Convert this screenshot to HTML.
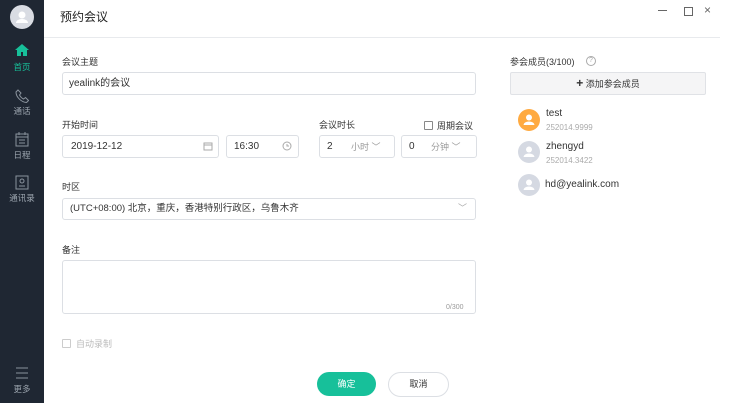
<!DOCTYPE html><html><head><meta charset="utf-8"><style>
*{margin:0;padding:0;box-sizing:border-box}
body{width:749px;height:409px;background:#fff;font-family:"Liberation Sans","Noto Sans CJK SC",sans-serif;font-size:9px;line-height:12px;color:#333;position:relative;overflow:hidden}
.a{position:absolute}
.sb{left:0;top:0;width:44px;height:403px;background:#1f2733}
.nl{width:44px;text-align:center;font-size:8.5px;color:#9aa3ad}
.in{border:1px solid #dcdfe4;border-radius:3px;background:#fff}
.lb{font-size:9px;color:#333}
.av{width:22px;height:22px;border-radius:50%;background:#d5d9e2}
</style></head><body>
<div class="a sb"></div>
<div class="a" style="left:10px;top:5px;width:24px;height:24px;border-radius:50%;background:#d9dce3"></div>
<svg class="a" style="left:10px;top:5px" width="24" height="24"><circle cx="12" cy="10" r="3.5" fill="#fff"/><path d="M6 18a6 4 0 0 1 12 0z" fill="#fff"/></svg>
<svg class="a" style="left:14px;top:43px" width="16" height="14"><path d="M8 1L1 7h2v6h4v-4h2v4h4V7h2z" fill="#17c09a"/></svg>
<div class="a nl" style="top:61px;color:#17c09a">首页</div>
<svg class="a" style="left:15px;top:89px" width="14" height="14"><path d="M3 1l3 3-1.5 2c1 2 2 3 4 4l2-1.5 3 3-2 2C6 13 1 8 1 3z" fill="none" stroke="#8a939d" stroke-width="1"/></svg>
<div class="a nl" style="top:105px">通话</div>
<svg class="a" style="left:15px;top:132px" width="14" height="15"><rect x="1" y="2" width="12" height="12" fill="none" stroke="#8a939d"/><path d="M1 5h12M4 0v3M10 0v3M4 8h6M4 11h6" stroke="#8a939d"/></svg>
<div class="a nl" style="top:149px">日程</div>
<svg class="a" style="left:15px;top:175px" width="14" height="15"><rect x="1" y="1" width="12" height="13" fill="none" stroke="#8a939d"/><circle cx="7" cy="6" r="2" fill="none" stroke="#8a939d"/><path d="M4 11h6" stroke="#8a939d"/></svg>
<div class="a nl" style="top:192px">通讯录</div>
<svg class="a" style="left:15px;top:367px" width="14" height="12"><path d="M1 1h12M1 6h12M1 11h12" stroke="#8a939d"/></svg>
<div class="a nl" style="top:383px">更多</div>

<div class="a" style="left:60px;top:10px;font-size:12px;line-height:15px;color:#222">预约会议</div>
<div class="a" style="left:658px;top:10px;width:9px;height:1px;background:#666"></div>
<div class="a" style="left:684px;top:7px;width:9px;height:9px;border:1px solid #666"></div>
<div class="a" style="left:704px;top:4px;font-size:12px;color:#666">×</div>
<div class="a" style="left:44px;top:37px;width:676px;height:1px;background:#e8eaed"></div>

<div class="a lb" style="left:62px;top:56px">会议主题</div>
<div class="a in" style="left:62px;top:72px;width:414px;height:23px"></div>
<div class="a" style="left:69px;top:78px;font-size:10px">yealink的会议</div>

<div class="a lb" style="left:62px;top:119px">开始时间</div>
<div class="a in" style="left:62px;top:135px;width:157px;height:23px"></div>
<div class="a" style="left:71px;top:141px;font-size:10px">2019-12-12</div>
<svg class="a" style="left:203px;top:141px" width="10" height="10"><rect x="1" y="2" width="8" height="7" fill="none" stroke="#aaa"/><path d="M1 4h8" stroke="#aaa"/></svg>
<div class="a in" style="left:226px;top:135px;width:73px;height:23px"></div>
<div class="a" style="left:234px;top:141px;font-size:10px">16:30</div>
<svg class="a" style="left:282px;top:141px" width="10" height="10"><circle cx="5" cy="5" r="4" fill="none" stroke="#aaa"/><path d="M5 3v2h2" fill="none" stroke="#aaa"/></svg>

<div class="a lb" style="left:319px;top:119px">会议时长</div>
<div class="a" style="left:424px;top:121px;width:9px;height:9px;border:1px solid #888;border-radius:1px"></div>
<div class="a lb" style="left:437px;top:120px">周期会议</div>
<div class="a in" style="left:319px;top:135px;width:76px;height:23px"></div>
<div class="a" style="left:327px;top:141px;font-size:10px">2</div>
<div class="a" style="left:351px;top:141px;color:#999">小时 ﹀</div>
<div class="a in" style="left:401px;top:135px;width:76px;height:23px"></div>
<div class="a" style="left:409px;top:141px;font-size:10px">0</div>
<div class="a" style="left:431px;top:141px;color:#999">分钟 ﹀</div>

<div class="a lb" style="left:62px;top:181px">时区</div>
<div class="a in" style="left:62px;top:198px;width:414px;height:22px"></div>
<div class="a" style="left:70px;top:203px;font-size:9.5px">(UTC+08:00) 北京，重庆，香港特别行政区，乌鲁木齐</div>
<div class="a" style="left:458px;top:202px;color:#aaa">﹀</div>

<div class="a lb" style="left:62px;top:244px">备注</div>
<div class="a in" style="left:62px;top:260px;width:414px;height:54px"></div>
<div class="a" style="left:446px;top:302px;font-size:7px;color:#999">0/300</div>

<div class="a" style="left:62px;top:339px;width:9px;height:9px;border:1px solid #ccc;border-radius:1px"></div>
<div class="a" style="left:76px;top:338px;color:#bbb">自动录制</div>

<div class="a" style="left:317px;top:372px;width:59px;height:24px;border-radius:12px;background:#17c09a;color:#fff;text-align:center;line-height:24px">确定</div>
<div class="a" style="left:388px;top:372px;width:61px;height:25px;border-radius:13px;border:1px solid #dcdfe4;text-align:center;line-height:23px">取消</div>

<div class="a lb" style="left:510px;top:56px">参会成员(3/100)</div>
<div class="a" style="left:586px;top:56px;width:10px;height:10px;border:1px solid #aaa;border-radius:50%;font-size:7px;color:#aaa;text-align:center;line-height:8px">?</div>
<div class="a" style="left:510px;top:72px;width:196px;height:23px;background:#f5f5f6;border:1px solid #e0e2e6;border-radius:2px;text-align:center;line-height:21px"><b style="font-size:12px">+</b> 添加参会成员</div>

<div class="a av" style="left:518px;top:109px;background:#ffaa40"></div>
<div class="a av" style="left:518px;top:141px"></div>
<div class="a av" style="left:518px;top:174px"></div>
<svg class="a" style="left:518px;top:109px" width="22" height="100"><g fill="#fff"><circle cx="11" cy="8.5" r="3"/><path d="M5.5 16a5.5 3.5 0 0 1 11 0z"/><circle cx="11" cy="40.5" r="3"/><path d="M5.5 48a5.5 3.5 0 0 1 11 0z"/><circle cx="11" cy="73.5" r="3"/><path d="M5.5 81a5.5 3.5 0 0 1 11 0z"/></g></svg>
<div class="a" style="left:546px;top:108px;font-size:10px">test</div>
<div class="a" style="left:546px;top:122px;font-size:8px;color:#aaa">252014.9999</div>
<div class="a" style="left:546px;top:141px;font-size:10px">zhengyd</div>
<div class="a" style="left:546px;top:155px;font-size:8px;color:#aaa">252014.3422</div>
<div class="a" style="left:545px;top:179px;font-size:10px">hd@yealink.com</div>
</body></html>
